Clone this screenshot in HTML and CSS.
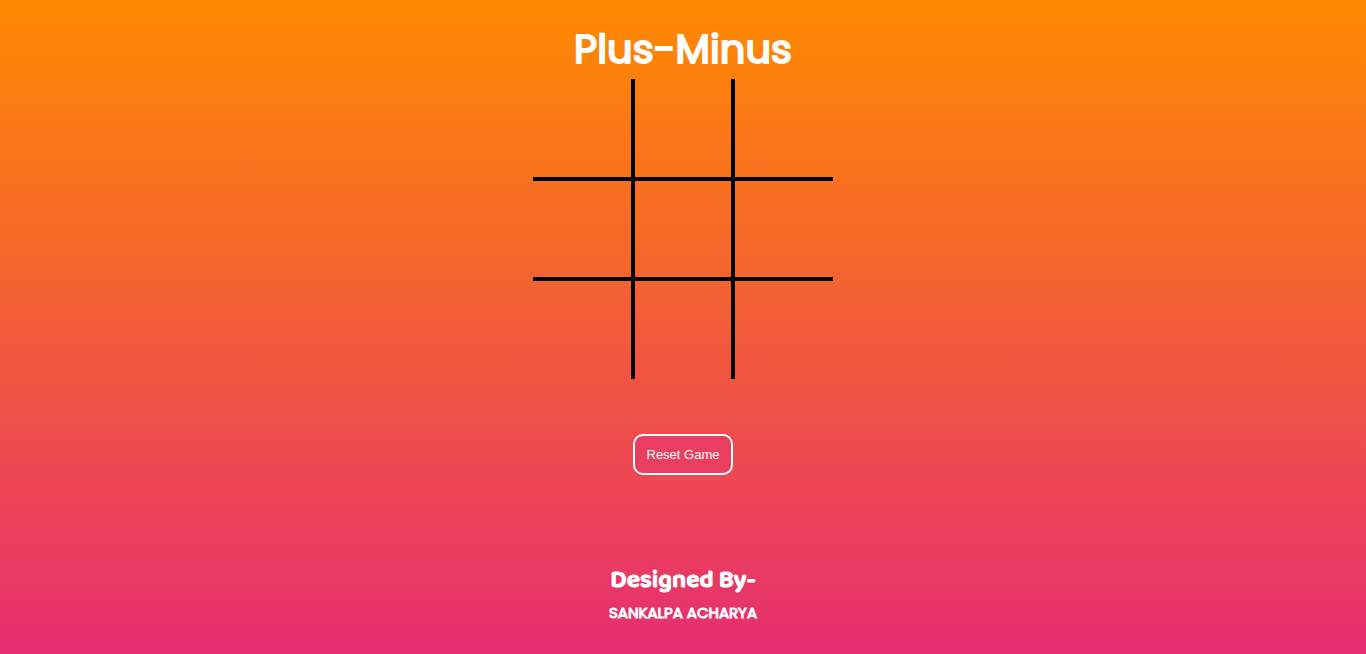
FILE: index.html
```html
<!DOCTYPE html>
<html lang="en">
<head>
<meta charset="utf-8">
<title>Plus-Minus</title>
<link rel="stylesheet" href="styles.css">
</head>
<body>
<main class="game">
  <h1 class="title">Plus-Minus</h1>
  <div class="board">
    <button class="cell" type="button" aria-label="Cell 1"></button>
    <button class="cell" type="button" aria-label="Cell 2"></button>
    <button class="cell" type="button" aria-label="Cell 3"></button>
    <button class="cell" type="button" aria-label="Cell 4"></button>
    <button class="cell" type="button" aria-label="Cell 5"></button>
    <button class="cell" type="button" aria-label="Cell 6"></button>
    <button class="cell" type="button" aria-label="Cell 7"></button>
    <button class="cell" type="button" aria-label="Cell 8"></button>
    <button class="cell" type="button" aria-label="Cell 9"></button>
  </div>
  <button class="reset" type="button">Reset Game</button>
</main>
<footer class="credits">
  <h2 class="credits-label">Designed By-</h2>
  <p class="credits-name">SANKALPA ACHARYA</p>
</footer>
</body>
</html>
```
FILE: styles.css
```css
* {
  box-sizing: border-box;
  margin: 0;
}

body {
  min-height: 100vh;
  display: flex;
  flex-direction: column;
  align-items: center;
  padding: 20px 0 30px;
  background: linear-gradient(#ff8a00, #e52e71);
  color: #fff;
  font-family: Poppins, "Open Sans", sans-serif;
}

.game {
  display: flex;
  flex-direction: column;
  align-items: center;
}

.title {
  font-size: 40px;
  line-height: 59px;
  font-weight: 400;
  -webkit-text-stroke: 2px #fff;
}

.board {
  display: grid;
  grid-template-columns: repeat(3, 100px);
  grid-auto-rows: 100px;
}

.cell {
  padding: 0;
  background: none;
  border: 2px solid #000;
}

.cell:nth-child(-n+3) { border-top: 0; }
.cell:nth-child(n+7) { border-bottom: 0; }
.cell:nth-child(3n+1) { border-left: 0; }
.cell:nth-child(3n) { border-right: 0; }

.reset {
  min-width: 100px;
  margin-top: 55px;
  padding: 11px 10px;
  border: 2px solid #fff;
  border-radius: 10px;
  background: #e93e60;
  color: #fff;
  font-family: "Liberation Sans", Arial, sans-serif;
  font-size: small;
  line-height: 15px;
}

.credits {
  margin-top: 90px;
  text-align: center;
}

.credits-label {
  font-family: "Baloo 2", "Noto Sans", sans-serif;
  font-size: 25px;
  line-height: 30px;
  font-weight: 600;
  -webkit-text-stroke: 1px #fff;
}

.credits-name {
  margin-top: 8px;
  font-size: 15px;
  line-height: 20px;
  font-weight: 400;
  -webkit-text-stroke: 1px #fff;
}
```
